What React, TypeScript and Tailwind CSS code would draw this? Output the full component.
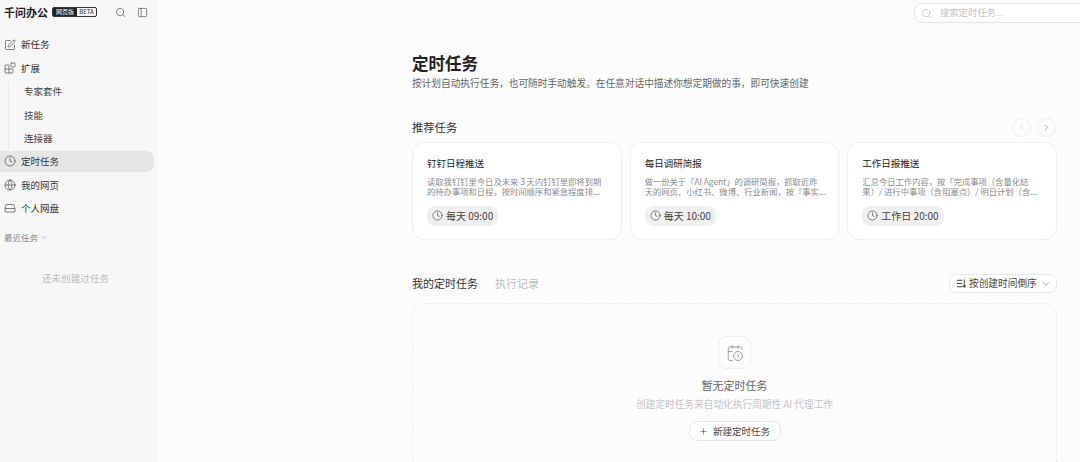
import React from 'react';
import { Search, PanelLeft, SquarePen, Clock, Globe, ChevronDown, ChevronLeft, ChevronRight, CalendarClock, Plus, Blocks } from 'lucide-react';

const font = "font-['Noto_Sans_CJK_SC','Inter',sans-serif]";

// drive icon from the sidebar, lucide's has dots on it
const DriveIcon = ({ size = 12, strokeWidth = 1.3, className = '' }: { size?: number; strokeWidth?: number; className?: string }) => (
  <svg width={size} height={size} viewBox="0 0 24 24" fill="none" stroke="currentColor" strokeWidth={strokeWidth} strokeLinejoin="round" className={className}>
    <path d="M6 5h12a2 2 0 0 1 2 1.6L22 13v5a2 2 0 0 1-2 2H4a2 2 0 0 1-2-2v-5l2-6.4A2 2 0 0 1 6 5z" />
    <path d="M2 13h20" />
  </svg>
);

const SortIcon = () => (
  <svg width="11" height="11" viewBox="0 0 24 24" fill="none" stroke="currentColor" strokeWidth="2.2" strokeLinecap="round" strokeLinejoin="round">
    <path d="M3 5h10M3 12h10M3 19h10" />
    <path d="M18 4v16M15 17l3 3 3-3" />
  </svg>
);

const navTop = [
  { label: '新任务', Icon: SquarePen },
  { label: '扩展', Icon: Blocks },
];
const subItems = ['专家套件', '技能', '连接器'];
const navBottom = [
  { label: '定时任务', Icon: Clock, active: true },
  { label: '我的网页', Icon: Globe },
  { label: '个人网盘', Icon: DriveIcon },
];

const cards = [
  { title: '钉钉日程推送', desc: '读取我钉钉里今日及未来 3 天内钉钉里即将到期的待办事项和日程，按时间顺序和紧急程度排...', time: '每天 09:00' },
  { title: '每日调研简报', desc: '做一份关于「AI Agent」的调研简报，抓取近昨\n天的网页、小红书、微博、行业新闻，按『事实...', time: '每天 10:00' },
  { title: '工作日报推送', desc: '汇总今日工作内容，按「完成事项（含量化结果）/ 进行中事项（含阻塞点）/ 明日计划（含...', time: '工作日 20:00' },
];

function NavRow({ label, Icon, active }: { label: string; Icon: React.ElementType; active?: boolean }) {
  return (
    <div className={`flex h-[21px] mb-[2.4px] items-center gap-[5px] pl-[4px] rounded-r-lg text-[9.5px] text-[#333] ${active ? 'bg-[#e6e6e6]' : ''}`}>
      <Icon size={12} strokeWidth={1.5} className="text-[#555]" />
      <span>{label}</span>
    </div>
  );
}

function Sidebar() {
  return (
    <aside className="w-[158px] shrink-0 bg-[#f7f7f7] pr-[4px] flex flex-col">
      <div className="flex items-center h-[24px] pl-[4px]">
        <span className="text-[11px] font-bold text-[#222]">千问办公</span>
        <span className="ml-[4px] flex h-[10px] w-[45px] items-center rounded-[2px] border border-[#333] text-[6px] leading-none">
          <span className="bg-[#222] text-white h-full flex items-center justify-center w-[24px]">网页版</span>
          <span className="flex-1 text-center text-[#333]">BETA</span>
        </span>
        <Search size={11} strokeWidth={1.5} className="ml-[18px] text-[#555]" />
        <PanelLeft size={11} strokeWidth={1.5} className="ml-[11px] text-[#555]" />
      </div>
      <nav className="mt-[10px]">
        {navTop.map((n) => <NavRow key={n.label} {...n} />)}
        <div className="ml-[8px] border-l border-[#eaeaea] pl-[15px]">
          {subItems.map((s) => (
            <div key={s} className="h-[21px] mb-[2.4px] flex items-center text-[9.5px] text-[#444]">{s}</div>
          ))}
        </div>
        {navBottom.map((n) => <NavRow key={n.label} {...n} />)}
      </nav>
      <div className="mt-[10px] pl-[4px] flex items-center gap-[2px] text-[8.5px] text-[#888]">
        最近任务 <ChevronDown size={9} strokeWidth={1.3} />
      </div>
      <div className="mt-[27px] text-center pr-[3px] text-[9.6px] text-[#bbb]">还未创建过任务</div>
    </aside>
  );
}

function TaskCard({ title, desc, time }: { title: string; desc: string; time: string }) {
  return (
    <div className="flex-1 h-[98px] bg-white rounded-[12px] border border-[#efefef] pl-[14px] pr-[12px] pt-[13px]">
      <div className="text-[9.5px] leading-[14px] text-[#222]">{title}</div>
      <p className="mt-[5.5px] h-[20px] whitespace-pre-line text-[8.3px] leading-[10px] text-[#8a8a8a]">{desc}</p>
      <div className="mt-[10px] flex w-fit h-[20px] items-center gap-[3px] rounded-[8px] bg-[#f0f0f0] px-[5px] text-[10px] text-[#444]">
        <Clock size={11} strokeWidth={1.4} />
        {time}
      </div>
    </div>
  );
}

export default function App() {
  return (
    <div className={`flex h-[462px] w-[1080px] overflow-hidden bg-[#fcfcfc] ${font}`}>
      <Sidebar />
      <main className="flex-1 relative">
        <div className="absolute right-[-10px] top-[3px] h-[20px] w-[176px] flex items-center gap-[8px] pl-[6px] rounded-[8px] border border-[#e5e5e5] bg-white text-[9.3px] text-[#c4c4c4]">
          <Search size={11} strokeWidth={1.3} className="text-[#aaa]" />
          搜索定时任务...
        </div>
        <div className="ml-[254px] w-[645px] pt-[52px]">
          <h1 className="text-[16.5px] leading-[22px] font-semibold text-[#222]">定时任务</h1>
          <p className="mt-[2px] text-[9.68px] leading-[14px] text-[#666]">按计划自动执行任务，也可随时手动触发。在任意对话中描述你想定期做的事，即可快速创建</p>

          <div className="mt-[27px] flex items-center justify-between h-[20px]">
            <h2 className="text-[11.3px] text-[#333]">推荐任务</h2>
            <div className="flex gap-[6px] pr-[1px]">
              <span className="flex h-[19px] w-[19px] items-center justify-center rounded-full border border-[#eee] text-[#ccc]"><ChevronLeft size={9} /></span>
              <span className="flex h-[19px] w-[19px] items-center justify-center rounded-full border border-[#eee] text-[#888]"><ChevronRight size={9} /></span>
            </div>
          </div>

          <div className="mt-[5px] flex gap-[8px]">
            {cards.map((c) => <TaskCard key={c.title} {...c} />)}
          </div>

          <div className="mt-[34px] flex items-center justify-between h-[19px]">
            <div className="flex gap-[17px] text-[11px]">
              <span className="text-[#333]">我的定时任务</span>
              <span className="text-[#bdbdbd]">执行记录</span>
            </div>
            <div className="flex h-[19px] w-[108px] items-center gap-[2px] pl-[6px] rounded-[7px] border border-[#e8e8e8] bg-white text-[9.7px] text-[#444]">
              <SortIcon />
              按创建时间倒序
              <ChevronDown size={10} strokeWidth={1.3} className="ml-[2px]" />
            </div>
          </div>

          <div className="mt-[10px] h-[200px] rounded-[12px] border border-dashed border-[#ececec] flex flex-col items-center pt-[32px]">
            <div className="flex h-[33px] w-[33px] items-center justify-center rounded-[8px] border border-[#eee] text-[#999]">
              <CalendarClock size={18} strokeWidth={1.2} />
            </div>
            <div className="mt-[8px] text-[11px] leading-[16px] text-[#666]">暂无定时任务</div>
            <div className="mt-[4px] text-[9.7px] leading-[14px] text-[#c4c4c4]">创建定时任务来自动化执行周期性 AI 代理工作</div>
            <div className="mt-[10px] flex h-[20px] w-[92px] items-center justify-center gap-[5px] rounded-[8px] border border-[#e5e5e5] bg-white text-[9.5px] text-[#444]">
              <Plus size={9} strokeWidth={1.5} />
              新建定时任务
            </div>
          </div>
        </div>
      </main>
    </div>
  );
}
